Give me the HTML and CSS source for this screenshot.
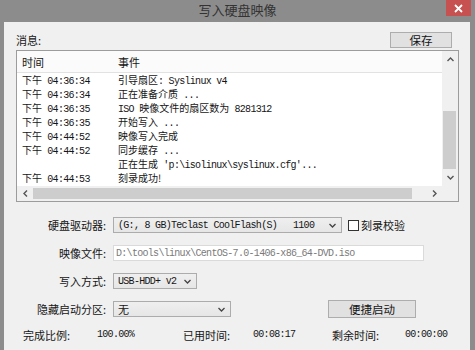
FILE: index.html
```html
<!DOCTYPE html>
<html lang="zh-CN">
<head>
<meta charset="utf-8">
<title>写入硬盘映像</title>
<link rel="stylesheet" href="styles.css">
</head>
<body>
<div class="window">
  <div class="titlebar">
    <span></span>
    <span class="title">写入硬盘映像</span>
    <span class="close"><svg width="9" height="9" viewBox="0 0 9 9"><path d="M1 1L8 8M8 1L1 8" stroke="#fff" stroke-width="1.8" fill="none"/></svg></span>
  </div>
  <div class="client">
    <div class="msg-row">
      <span class="msg-label">消息:</span>
      <button class="btn save">保存</button>
    </div>
    <div class="list">
      <div class="list-main">
        <div class="list-head"><span>时间</span><span>事件</span></div>
        <div class="list-body">
          <div class="row"><span>下午<span class="m"> 04:36:34</span></span><span>引导扇区<span class="m">: Syslinux v4</span></span></div>
          <div class="row"><span>下午<span class="m"> 04:36:34</span></span><span>正在准备介质<span class="m"> ...</span></span></div>
          <div class="row"><span>下午<span class="m"> 04:36:35</span></span><span><span class="m">ISO </span>映像文件的扇区数为<span class="m"> 8281312</span></span></div>
          <div class="row"><span>下午<span class="m"> 04:36:35</span></span><span>开始写入<span class="m"> ...</span></span></div>
          <div class="row"><span>下午<span class="m"> 04:44:52</span></span><span>映像写入完成</span></div>
          <div class="row"><span>下午<span class="m"> 04:44:52</span></span><span>同步缓存<span class="m"> ...</span></span></div>
          <div class="row"><span></span><span>正在生成<span class="m"> 'p:\isolinux\syslinux.cfg'...</span></span></div>
          <div class="row"><span>下午<span class="m"> 04:44:53</span></span><span>刻录成功!</span></div>
        </div>
      </div>
      <div class="vscroll">
        <div class="sbtn"><svg width="7" height="5" viewBox="0 0 7 5"><path d="M0.5 4L3.5 1L6.5 4" stroke="#555" stroke-width="1.4" fill="none"/></svg></div>
        <div class="vtrack"><div class="vthumb"></div></div>
        <div class="sbtn"><svg width="7" height="5" viewBox="0 0 7 5"><path d="M0.5 1L3.5 4L6.5 1" stroke="#555" stroke-width="1.4" fill="none"/></svg></div>
      </div>
      <div class="hscroll">
        <div class="hbtn"><svg width="5" height="7" viewBox="0 0 5 7"><path d="M4 0.5L1 3.5L4 6.5" stroke="#555" stroke-width="1.4" fill="none"/></svg></div>
        <div class="htrack"><div class="hthumb"></div></div>
        <div class="hbtn"><svg width="5" height="7" viewBox="0 0 5 7"><path d="M1 0.5L4 3.5L1 6.5" stroke="#555" stroke-width="1.4" fill="none"/></svg></div>
      </div>
      <div class="corner"></div>
    </div>

    <div class="form">
      <span class="flabel">硬盘驱动器:</span>
      <div class="fctl">
        <div class="select drive">
          <span class="m drive-name">(G:, 8 GB)Teclast CoolFlash(S)</span><span class="m">1100</span>
          <svg class="chev" width="7" height="5" viewBox="0 0 7 5"><path d="M0.5 1L3.5 4L6.5 1" stroke="#444" stroke-width="1.3" fill="none"/></svg>
        </div>
        <span class="box"></span><span class="check-text">刻录校验</span>
      </div>

      <span class="flabel">映像文件:</span>
      <div class="fctl">
        <div class="input"><span class="m">D:\tools\linux\CentOS-7.0-1406-x86_64-DVD.iso</span></div>
      </div>

      <span class="flabel">写入方式:</span>
      <div class="fctl">
        <div class="select mode">
          <span class="m">USB-HDD+ v2</span>
          <svg class="chev" width="7" height="5" viewBox="0 0 7 5"><path d="M0.5 1L3.5 4L6.5 1" stroke="#444" stroke-width="1.3" fill="none"/></svg>
        </div>
      </div>

      <span class="flabel">隐藏启动分区:</span>
      <div class="fctl">
        <div class="select hide">
          <span>无</span>
          <svg class="chev" width="7" height="5" viewBox="0 0 7 5"><path d="M0.5 1L3.5 4L6.5 1" stroke="#444" stroke-width="1.3" fill="none"/></svg>
        </div>
        <button class="btn quick">便捷启动</button>
      </div>
    </div>

    <div class="stats">
      <span>完成比例:</span><span class="m">100.00%</span>
      <span>已用时间:</span><span class="m">00:08:17</span>
      <span>剩余时间:</span><span class="m">00:00:00</span>
    </div>
  </div>
</div>
</body>
</html>
```

FILE: styles.css
```css
* { box-sizing: border-box; }
html, body { margin: 0; padding: 0; }
body {
  width: 475px;
  height: 350px;
  overflow: hidden;
  background: #8c8c8c;
  font-family: "Noto Sans CJK SC", "Liberation Sans", sans-serif;
  font-size: 11px;
  color: #151515;
}
.window { display: flex; flex-direction: column; height: 350px; }

.titlebar {
  height: 22px;
  display: grid;
  grid-template-columns: 1fr auto 1fr;
  align-items: start;
}
.title { font-size: 13px; line-height: 20px; color: #333; }
.close {
  justify-self: end;
  width: 25px;
  height: 16px;
  margin-right: 4px;
  background: #c75050;
  display: flex;
  align-items: center;
  justify-content: center;
}

.client {
  flex: 1;
  margin: 0 5px 0 4px;
  background: #f0f0f0;
  padding-top: 10px;
}

.m {
  font-family: "Liberation Mono", monospace;
  font-size: 10px;
  letter-spacing: -0.7px;
}

.msg-row {
  display: flex;
  justify-content: space-between;
  align-items: center;
  height: 16px;
  padding: 0 18px 0 12px;
}
.msg-label { line-height: 16px; }

.btn {
  font-family: inherit;
  font-size: 11.5px;
  color: #151515;
  height: 16px;
  border: 1px solid #adadad;
  background: #e1e1e1;
  padding: 0;
  line-height: 14px;
}
.save { width: 62px; }

.list {
  margin: 2px 11px 0 12px;
  height: 152px;
  border: 1px solid #9c9c9c;
  background: #fff;
  display: grid;
  grid-template-columns: 1fr 16px;
  grid-template-rows: 1fr 15px;
}
.list-main { overflow: hidden; min-width: 0; }
.list-head {
  height: 22px;
  border-bottom: 1px solid #e2e2e2;
  background: #fbfbfb;
  display: grid;
  grid-template-columns: 96px 1fr;
  padding-left: 5px;
  align-items: center;
}
.row {
  display: grid;
  grid-template-columns: 96px 1fr;
  padding-left: 5px;
  height: 14px;
  font-size: 10px;
  line-height: 14px;
  white-space: nowrap;
}

.vscroll {
  grid-column: 2;
  grid-row: 1;
  background: #f0f0f0;
  display: flex;
  flex-direction: column;
}
.sbtn { height: 17px; display: flex; align-items: center; justify-content: center; }
.vtrack { flex: 1; }
.vthumb { margin: 43px 2px 0 1px; height: 58px; background: #cdcdcd; }

.hscroll {
  grid-column: 1;
  grid-row: 2;
  background: #f0f0f0;
  display: flex;
}
.hbtn { width: 16px; display: flex; align-items: center; justify-content: center; }
.htrack { flex: 1; }
.hthumb { margin-top: 2px; width: 379px; height: 11px; background: #cdcdcd; }
.corner { grid-column: 2; grid-row: 2; background: #f0f0f0; }

.form {
  display: grid;
  grid-template-columns: 102px 1fr;
  column-gap: 7px;
  row-gap: 12px;
  grid-auto-rows: 16px;
  margin-top: 15px;
  align-items: center;
}
.flabel { text-align: right; white-space: nowrap; line-height: 16px; }
.fctl { display: flex; align-items: center; height: 16px; }

.select {
  height: 16px;
  border: 1px solid #acacac;
  background: linear-gradient(#efefef, #e6e6e6);
  display: flex;
  align-items: center;
  padding: 0 5px 0 4px;
  white-space: nowrap;
}
.select .chev { margin-left: auto; flex: none; }
.drive { width: 229px; }
.drive-name { width: 175px; flex: none; }
.mode { width: 84px; }
.hide { width: 118px; }

.box {
  width: 11px;
  height: 11px;
  border: 1px solid #333;
  background: #fff;
  margin: 0 2px 0 6px;
}
.check-text { line-height: 16px; }

.input {
  width: 311px;
  height: 16px;
  border: 1px solid #dadada;
  background: #fff;
  color: #7a7a7a;
  padding-left: 2px;
  display: flex;
  align-items: center;
  white-space: nowrap;
}

.quick { width: 88px; height: 18px; margin-left: 97px; }

.stats {
  display: grid;
  grid-template-columns: 74px 86px 70px 79px 73px auto;
  padding-left: 19px;
  margin-top: 11px;
  line-height: 14px;
  white-space: nowrap;
}
```
